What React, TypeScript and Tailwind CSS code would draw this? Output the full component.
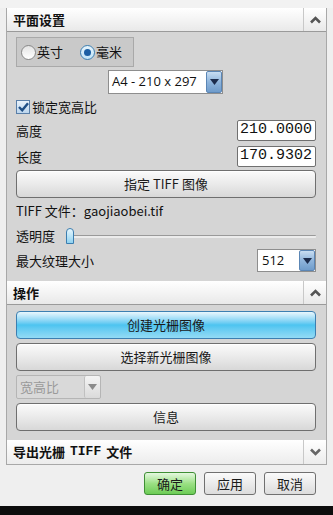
import React from "react";

const cjk = { fontFamily: '"Noto Sans CJK SC", "Noto Sans", sans-serif' };
const mono = { fontFamily: '"Liberation Mono", "DejaVu Sans Mono", monospace' };

function Header({ title, collapsed }: { title: string; collapsed?: boolean }) {
  return (
    <div className="flex h-[24px] items-stretch border-b border-[#9a9a9a] bg-gradient-to-b from-[#ffffff] to-[#e9e9e9]">
      <div className="flex flex-1 items-center pl-[6px] text-[13px] font-bold text-[#111]" style={cjk}>
        {title}
      </div>
      <div className="flex w-[23px] items-center justify-center border-l border-[#c8c8c8]">
        <svg width="11" height="8" viewBox="0 0 11 8">
          {collapsed ? (
            <path d="M1 1.5 L5.5 6 L10 1.5" stroke="#555" strokeWidth="2.6" fill="none" />
          ) : (
            <path d="M1 6.5 L5.5 2 L10 6.5" stroke="#555" strokeWidth="2.6" fill="none" />
          )}
        </svg>
      </div>
    </div>
  );
}

function DropArrow({ disabled }: { disabled?: boolean }) {
  return (
    <div
      className={
        disabled
          ? "flex w-[16px] items-center justify-center rounded-[2px] border-l border-[#c0c0c0] bg-gradient-to-b from-[#f4f4f4] to-[#dadada]"
          : "flex w-[16px] items-center justify-center rounded-[2px] border border-[#5b86b5] bg-gradient-to-b from-[#c9def2] via-[#8fb5dc] to-[#6f9ccb]"
      }
    >
      <svg width="9" height="6" viewBox="0 0 9 6">
        <path d="M0 0 L9 0 L4.5 6 Z" fill={disabled ? "#8a8a8a" : "#1c2c4c"} />
      </svg>
    </div>
  );
}

function Btn({ children }: { children: React.ReactNode }) {
  return (
    <div
      className="flex h-[28px] items-center justify-center rounded-[4px] border border-[#6f6f6f] bg-gradient-to-b from-[#fbfbfb] via-[#eaeaea] to-[#d8d8d8] text-[13px] text-[#1a1a1a] shadow-[inset_0_1px_0_#ffffff]"
      style={cjk}
    >
      {children}
    </div>
  );
}

export default function App() {
  return (
    <div className="relative flex h-[515px] w-[333px] flex-col overflow-hidden bg-[#efefef]" style={cjk}>
      <div className="h-[8px] shrink-0 bg-[#f2f2f2]" />
      <div className="flex">
        <div className="ml-[6px] w-[321px] border-b border-l border-r border-[#a8a8a8]">
          <Header title="平面设置" />
          <div className="flex flex-col bg-[#d5d5d5] pb-[9px] pl-[9px] pr-[10px] pt-[5px]">
            {/* radio group */}
            <div className="flex h-[30px] w-[118px] items-center gap-[17px] border border-[#a9a9a9] bg-[#c9c9c9] pl-[4px] text-[13px] text-[#111]">
              <span className="flex items-center">
                <span className="mr-[1px] inline-block h-[15px] w-[15px] rounded-full border border-[#888] bg-gradient-to-b from-[#e4e4e4] to-[#ffffff]" />
                英寸
              </span>
              <span className="flex items-center">
                <span className="mr-[1px] flex h-[15px] w-[15px] items-center justify-center rounded-full border border-[#3c7fb1] bg-gradient-to-b from-[#e6f4fc] to-[#bfe3f7]">
                  <span className="h-[7px] w-[7px] rounded-full bg-[#1b5fa4]" />
                </span>
                毫米
              </span>
            </div>
            {/* size dropdown */}
            <div className="ml-[92px] mt-[3px] flex h-[24px] w-[115px] border border-[#8e8e8e] bg-white">
              <div className="flex flex-1 items-center pl-[3px] text-[13px] text-[#111]" style={{ fontFamily: '"Open Sans", "Noto Sans", sans-serif' }}>
                A4 - 210 x 297
              </div>
              <DropArrow />
            </div>
            {/* checkbox */}
            <div className="mt-[4px] flex h-[17px] items-center text-[13px] text-[#111]">
              <span className="mr-[2px] flex h-[14px] w-[14px] items-center justify-center border border-[#5a7fa8] bg-gradient-to-b from-[#e8f2fb] to-[#bcd6ee]">
                <svg width="11" height="10" viewBox="0 0 11 10">
                  <path d="M1 5 L4.2 8.3 L10 1.2" stroke="#1f4f86" strokeWidth="2.4" fill="none" />
                </svg>
              </span>
              锁定宽高比
            </div>
            {/* height */}
            <div className="mt-[5px] flex h-[21px] items-center justify-between">
              <span className="text-[13px] text-[#111]">高度</span>
              <div className="flex h-[21px] w-[79px] items-center overflow-hidden rounded-[2px] border border-[#707070] bg-white pl-[2px] text-[15px] text-[#111]" style={mono}>
                210.0000
              </div>
            </div>
            <div className="mt-[5px] flex h-[21px] items-center justify-between">
              <span className="text-[13px] text-[#111]">长度</span>
              <div className="flex h-[21px] w-[79px] items-center overflow-hidden rounded-[2px] border border-[#707070] bg-white pl-[2px] text-[15px] text-[#111]" style={mono}>
                170.9302
              </div>
            </div>
            <div className="mt-[3px]">
              <Btn>指定 TIFF 图像</Btn>
            </div>
            <div className="mt-[3px] flex h-[20px] items-center text-[13px] text-[#111]">
              TIFF 文件：gaojiaobei.tif
            </div>
            {/* slider */}
            <div className="mt-[4px] flex h-[22px] items-center text-[13px] text-[#111]">
              <span>透明度</span>
              <div className="relative ml-[11px] flex h-[16px] flex-1 items-center">
                <div className="h-[3px] w-[250px] rounded-[1px] border-t border-[#9a9a9a] bg-[#ececec]" />
                <div className="absolute left-0 top-0 h-[16px] w-[8px] rounded-b-[2px] rounded-t-full border border-[#3b7eb0] bg-gradient-to-b from-[#e7f7fe] to-[#8fd2f0]" />
              </div>
            </div>
            <div className="mt-[2px] flex h-[23px] items-center justify-between">
              <span className="text-[13px] text-[#111]">最大纹理大小</span>
              <div className="flex h-[23px] w-[59px] border border-[#8e8e8e] bg-white">
                <div className="flex flex-1 items-center pl-[4px] text-[13px] text-[#111]" style={{ fontFamily: '"Open Sans", "Noto Sans", sans-serif' }}>
                  512
                </div>
                <DropArrow />
              </div>
            </div>
          </div>
          <Header title="操作" />
          <div className="flex flex-col gap-[4px] bg-[#d5d5d5] pb-[9px] pl-[9px] pr-[10px] pt-[6px]">
            <div
              className="flex h-[28px] items-center justify-center rounded-[4px] border border-[#3c7fb1] bg-gradient-to-b from-[#e9f7fd] via-[#4cc4f0] to-[#93dbf5] text-[13px] text-[#1a1a1a]"
              style={cjk}
            >
              创建光栅图像
            </div>
            <Btn>选择新光栅图像</Btn>
            <div className="flex h-[24px] w-[85px] rounded-[2px] border border-[#b5b5b5] bg-[#d9d9d9]">
              <div className="flex flex-1 items-center pl-[3px] text-[13px] text-[#9a9a9a]">宽高比</div>
              <DropArrow disabled />
            </div>
            <Btn>信息</Btn>
          </div>
          <div className="flex h-[24px] items-stretch bg-gradient-to-b from-[#ffffff] to-[#ececec]">
            <div className="flex flex-1 items-center pl-[6px] text-[13px] font-bold text-[#111]">
              导出光栅 <span className="mx-[5px]" style={mono}>TIFF</span> 文件
            </div>
            <div className="flex w-[23px] items-center justify-center border-l border-[#c8c8c8]">
              <svg width="11" height="8" viewBox="0 0 11 8">
                <path d="M1 1.5 L5.5 6 L10 1.5" stroke="#666" strokeWidth="2.6" fill="none" />
              </svg>
            </div>
          </div>
        </div>
      </div>
      {/* bottom buttons */}
      <div className="flex flex-1 items-start justify-end gap-[8px] pr-[17px] pt-[7px]">
        <div className="flex h-[23px] w-[52px] items-center justify-center rounded-[3px] border border-[#3f8f35] bg-gradient-to-b from-[#e5f8df] via-[#9be084] to-[#6ccc55] text-[13px] text-[#1a1a1a]">
          确定
        </div>
        <div className="flex h-[23px] w-[52px] items-center justify-center rounded-[3px] border border-[#707070] bg-gradient-to-b from-[#fbfbfb] to-[#dcdcdc] text-[13px] text-[#1a1a1a]">
          应用
        </div>
        <div className="flex h-[23px] w-[52px] items-center justify-center rounded-[3px] border border-[#707070] bg-gradient-to-b from-[#fbfbfb] to-[#dcdcdc] text-[13px] text-[#1a1a1a]">
          取消
        </div>
      </div>
      <div className="h-[9px] shrink-0 bg-[#0d0d0d]" />
    </div>
  );
}
